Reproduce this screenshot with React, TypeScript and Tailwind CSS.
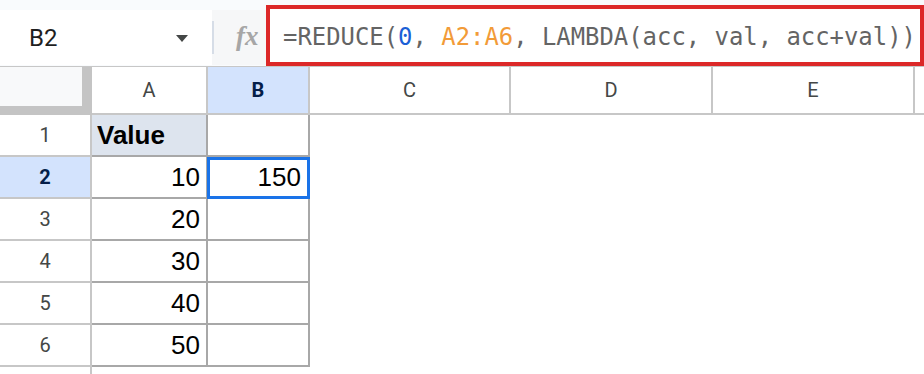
import React from 'react';

const rows = [
    { n: 1, a: 'Value', b: '' },
    { n: 2, a: '10', b: '150' },
    { n: 3, a: '20', b: '' },
    { n: 4, a: '30', b: '' },
    { n: 5, a: '40', b: '' },
    { n: 6, a: '50', b: '' },
];

const TopBar: React.FC = () => {
    return (
        <div className="flex h-[66px] bg-[#f9fbfd]">
            <div className="mt-[10px] h-[55px] w-[212px] bg-white flex items-center justify-between pl-[29px] pr-[24px]">
                <span className="text-[24px] text-[#1f1f1f] font-['Roboto',sans-serif]">B2</span>
                <svg width="12" height="7" viewBox="0 0 12 7" className="mt-[1px]">
                    <path d="M0 0 L12 0 L6 7 Z" fill="#444746" />
                </svg>
            </div>
            <div className="mt-[10px] h-[55px] w-[54px] bg-[#f6f7f8] flex items-center">
                <div className="w-[2px] h-[33px] bg-[#d6dde7]" />
                <span className="ml-[22px] -mt-[2px] text-[27px] italic font-bold text-[#a6a6a6] font-['Liberation_Serif',serif] leading-none">
                    fx
                </span>
            </div>
            <div className="mt-[5px] h-[61px] flex-1 border-4 border-[#dc2828] bg-white flex items-center pl-[13px] pt-[4px]">
                <span className="text-[23.9px] text-[#646464] whitespace-nowrap font-['DejaVu_Sans_Mono',monospace]">
                    =REDUCE(<span className="text-[#1b5fd6]">0</span>, <span className="text-[#f29b38]">A2:A6</span>, LAMBDA(acc, val, acc+val))
                </span>
            </div>
        </div>
    );
};

const HeaderRow: React.FC = () => {
    return (
        <div className="flex h-[48px] text-[20px] text-[#444746] font-['Roboto',sans-serif]">
            <div className="w-[92px] h-full bg-[#c4c4c4]">
                <div className="w-[82px] h-[39px] bg-[#f8f9fa]" />
            </div>
            <div className="w-[116px] border-r-2 border-b-2 border-[#c7c7c7] flex items-center justify-center">A</div>
            <div className="w-[102px] bg-[#d3e3fd] border-r-2 border-b-2 border-[#c7c7c7] flex items-center justify-center font-bold text-[#041e49]">
                B
            </div>
            <div className="w-[201px] border-r-2 border-b-2 border-[#c7c7c7] flex items-center justify-center">C</div>
            <div className="w-[202px] border-r-2 border-b-2 border-[#c7c7c7] flex items-center justify-center">D</div>
            <div className="w-[202px] border-r-2 border-b-2 border-[#c7c7c7] flex items-center justify-center">E</div>
            <div className="flex-1 border-b-2 border-[#c7c7c7]" />
        </div>
    );
};

const App: React.FC = () => {
    return (
        <div className="w-[924px] h-[374px] overflow-hidden bg-white">
            <TopBar />
            <div className="border-t border-[#c7c7c7]">
                <HeaderRow />
                {rows.map((r) => (
                    <div key={r.n} className="flex h-[42px]">
                        {r.n === 2 ? (
                            <div className="w-[92px] border-r-2 border-b-2 border-[#c7c7c7] bg-[#d3e3fd] flex items-center justify-center text-[20px] font-bold text-[#041e49] font-['Roboto',sans-serif]">
                                {r.n}
                            </div>
                        ) : (
                            <div className="w-[92px] border-r-2 border-b-2 border-[#c7c7c7] flex items-center justify-center text-[20px] text-[#444746] font-['Roboto',sans-serif]">
                                {r.n}
                            </div>
                        )}
                        {r.n === 1 ? (
                            <div className="w-[116px] border-r-2 border-b-2 border-[#a8a8a8] bg-[#dde4ee] flex items-center pl-[5px] text-[26px] font-bold text-black font-['Liberation_Sans',Arial,sans-serif]">
                                {r.a}
                            </div>
                        ) : (
                            <div className="w-[116px] border-r-2 border-b-2 border-[#a8a8a8] flex items-center justify-end pr-[6px] text-[26px] text-black font-['Liberation_Sans',Arial,sans-serif]">
                                {r.a}
                            </div>
                        )}
                        <div className="relative w-[102px] border-r-2 border-b-2 border-[#a8a8a8] flex items-center justify-end pr-[7px] text-[26px] text-black font-['Liberation_Sans',Arial,sans-serif]">
                            {r.b}
                            {r.n === 2 && (
                                <div className="absolute -left-px top-0 w-[103px] h-[42px] border-[3px] border-[#1a73e8]" />
                            )}
                        </div>
                        <div className="flex-1" />
                    </div>
                ))}
                <div className="flex h-[20px]">
                    <div className="w-[92px] border-r-2 border-[#c7c7c7]" />
                </div>
            </div>
        </div>
    );
};

export default App;
